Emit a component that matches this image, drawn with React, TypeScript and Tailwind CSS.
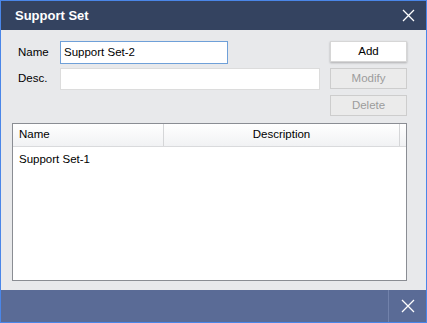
export default function App() {
    return (
        <div className="w-[427px] h-[323px] border border-[#4a86e8] flex flex-col bg-[#e8e9eb] font-['Liberation_Sans',Arial,sans-serif] text-[11.5px] text-black">
            <div className="h-[29px] bg-[#344360] flex items-center justify-between pl-[14px] pr-[11px] shrink-0">
                <span className="text-white font-bold text-[13px]">Support Set</span>
                <svg width="13" height="13" viewBox="0 0 13 13" stroke="white" strokeWidth="1.3">
                    <path d="M1 1L12 12M12 1L1 12" />
                </svg>
            </div>

            <div className="flex-1 flex flex-col px-[11px] pt-[11px] pb-[9px]">
                <div className="flex">
                    <div className="flex-1 flex flex-col gap-[4px] pl-[6px]">
                        <div className="flex items-center">
                            <span className="w-[42px]">Name</span>
                            <div className="w-[168px] h-[23px] bg-white border border-[#6fa0d8] flex items-center px-[3px]">Support Set-2</div>
                        </div>
                        <div className="flex items-center">
                            <span className="w-[42px]">Desc.</span>
                            <div className="w-[260px] h-[22px] bg-white border border-[#dcdcdc]"></div>
                        </div>
                    </div>
                    <div className="flex flex-col gap-[6px] w-[77px] mr-[8px]">
                        <div className="h-[21px] bg-white border border-[#d6d6d6] shadow-[0_1px_2px_rgba(0,0,0,0.25)] flex items-center justify-center">Add</div>
                        <div className="h-[21px] bg-[#ebebeb] border border-[#cdcdcd] text-[#9c9c9c] flex items-center justify-center">Modify</div>
                        <div className="h-[21px] bg-[#ebebeb] border border-[#cdcdcd] text-[#9c9c9c] flex items-center justify-center">Delete</div>
                    </div>
                </div>

                <div className="mt-[7px] mr-[8px] flex-1 bg-white border border-[#8a8d93] flex flex-col">
                    <div className="h-[23px] flex bg-gradient-to-b from-white to-[#f1f2f4] border-b border-[#d9dadc]">
                        <div className="w-[151px] border-r border-[#d5d6d8] flex items-center pl-[6px]">Name</div>
                        <div className="w-[236px] border-r border-[#d5d6d8] flex items-center justify-center">Description</div>
                        <div className="flex-1"></div>
                    </div>
                    <div className="pl-[6px] pt-[4px]">Support Set-1</div>
                </div>
            </div>

            <div className="h-[32px] bg-[#5a6b96] flex justify-end shrink-0">
                <div className="w-[38px] border-l border-[#7282ab] flex items-center justify-center">
                    <svg width="14" height="14" viewBox="0 0 14 14" stroke="white" strokeWidth="1.3">
                        <path d="M1 1L13 13M13 1L1 13" />
                    </svg>
                </div>
            </div>
        </div>
    );
}
